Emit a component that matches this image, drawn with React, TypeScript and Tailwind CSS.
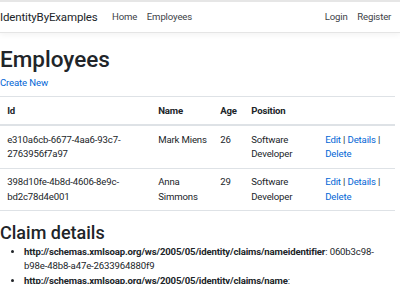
import React from 'react';

const employees = [
  { id: 'e310a6cb-6677-4aa6-93c7-2763956f7a97', name: 'Mark Miens', age: 26, position: 'Software Developer' },
  { id: '398d10fe-4b8d-4606-8e9c-bd2c78d4e001', name: 'Anna Simmons', age: 29, position: 'Software Developer' },
];

const claims = [
  {
    type: 'http://schemas.xmlsoap.org/ws/2005/05/identity/claims/nameidentifier',
    value: '060b3c98-b98e-48b8-a47e-2633964880f9',
  },
  { type: 'http://schemas.xmlsoap.org/ws/2005/05/identity/claims/name', value: '' },
];

const Actions: React.FC = () => (
  <>
    <a className="text-[#0366d6]">Edit</a> | <a className="text-[#0366d6]">Details</a> |{' '}
    <a className="text-[#0366d6]">Delete</a>
  </>
);

export default function App() {
  return (
    <div className="w-[400px] h-[284px] overflow-hidden bg-white text-[#212529] text-[9.6px] leading-[14.4px] tracking-[-0.15px] font-['Roboto',sans-serif]">
      <nav className="h-[33px] border-t-2 border-t-[#e6e6e6] border-b border-b-[#e5e5e5] shadow-[0_2px_6px_rgba(0,0,0,0.05)] flex items-center justify-between pr-[4px]">
        <div className="flex items-center">
          <span className="text-[11.5px] leading-[18px] mr-[9.6px]">IdentityByExamples</span>
          <a className="px-[4.8px] text-[#3d4247]">Home</a>
          <a className="px-[4.8px] text-[#3d4247]">Employees</a>
        </div>
        <div className="flex items-center">
          <a className="px-[4.8px] text-[#3d4247]">Login</a>
          <a className="px-[4.8px] text-[#3d4247]">Register</a>
        </div>
      </nav>

      <main className="pt-[12px]">
        <h1 className="text-[22.5px] leading-[28.8px] font-medium tracking-normal mb-[1.8px]">Employees</h1>
        <p className="mb-[6px]">
          <a className="text-[#0366d6]">Create New</a>
        </p>

        <table className="w-[395px] table-fixed border-collapse mb-[9.6px]">
          <colgroup>
            <col className="w-[151px]" />
            <col className="w-[62px]" />
            <col className="w-[31px]" />
            <col className="w-[74px]" />
            <col className="w-[77px]" />
          </colgroup>
          <thead>
            <tr className="border-t border-[#dee2e6]">
              <th className="px-[7.2px] py-[6.5px] text-left font-bold border-b-2 border-[#dee2e6]">Id</th>
              <th className="pl-[7.2px] pr-[3px] py-[6.5px] text-left font-bold border-b-2 border-[#dee2e6]">Name</th>
              <th className="px-[7.2px] py-[6.5px] text-left font-bold border-b-2 border-[#dee2e6]">Age</th>
              <th className="px-[7.2px] py-[6.5px] text-left font-bold border-b-2 border-[#dee2e6]">Position</th>
              <th className="px-[7.2px] py-[6.5px] border-b-2 border-[#dee2e6]"></th>
            </tr>
          </thead>
          <tbody>
            {employees.map((e) => (
              <tr key={e.id} className="border-b border-[#dee2e6] align-top">
                <td className="px-[7.2px] py-[6.3px]">{e.id}</td>
                <td className="pl-[7.2px] pr-[3px] py-[6.3px]">{e.name}</td>
                <td className="px-[7.2px] py-[6.3px]">{e.age}</td>
                <td className="px-[7.2px] py-[6.3px]">{e.position}</td>
                <td className="px-[7.2px] py-[6.3px]">
                  <Actions />
                </td>
              </tr>
            ))}
          </tbody>
        </table>

        <h2 className="text-[18px] leading-[23px] font-medium tracking-normal mb-[1px]">Claim details</h2>
        <ul className="list-disc pl-[24px] w-[390px]">
          {claims.map((c) => (
            <li key={c.type}>
              <strong>{c.type}</strong>: {c.value}
            </li>
          ))}
        </ul>
      </main>
    </div>
  );
}
